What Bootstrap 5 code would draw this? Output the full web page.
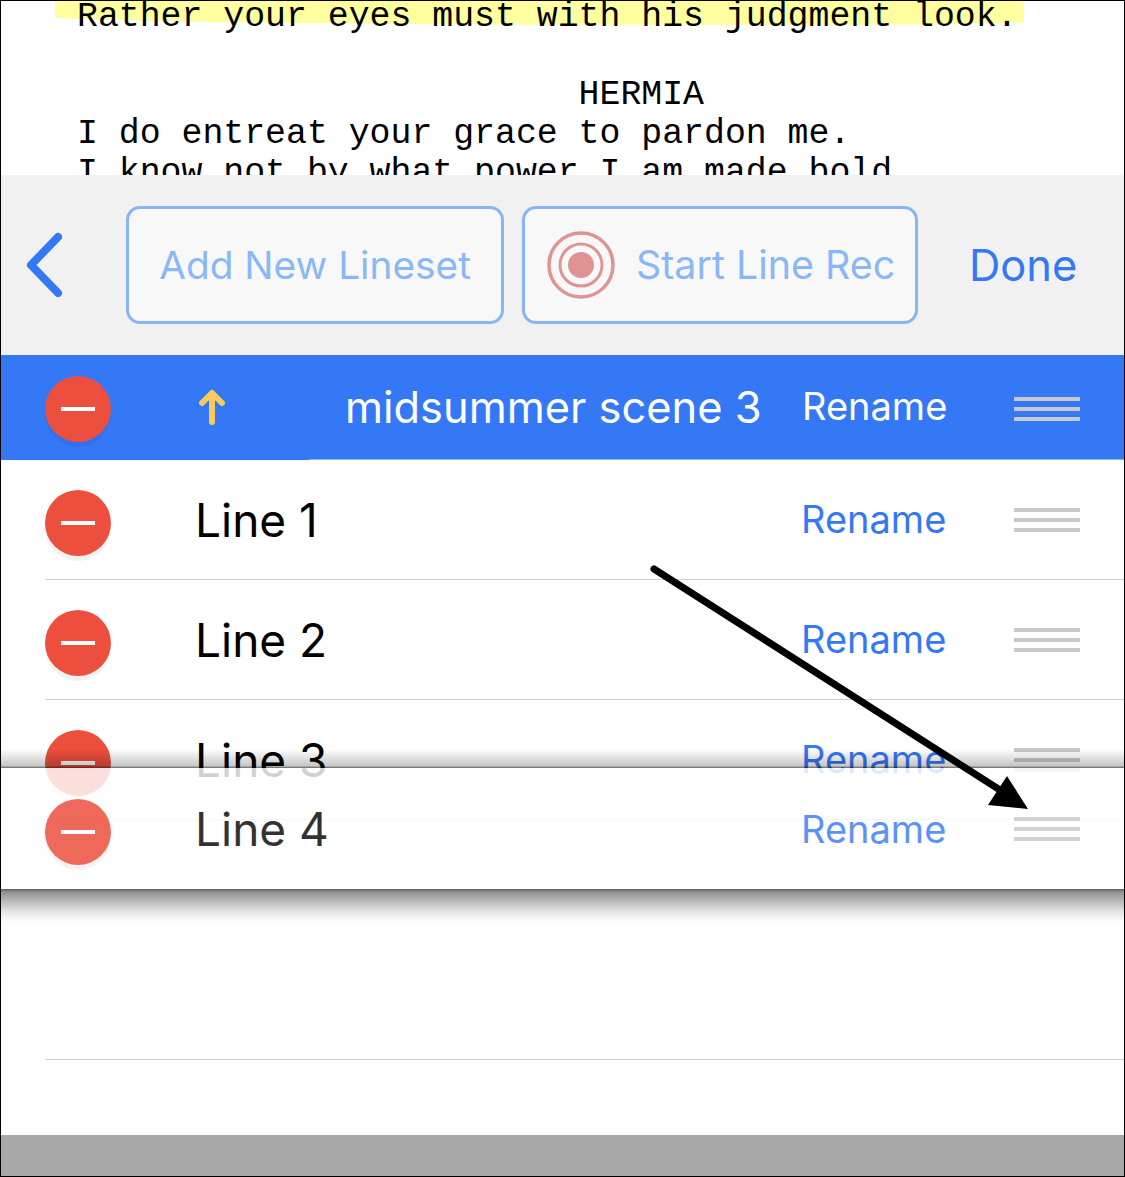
<!DOCTYPE html>
<html lang="en">
<head>
  <meta charset="UTF-8">
  <meta name="viewport" content="width=device-width, initial-scale=1.0">
  <link href="https://cdn.jsdelivr.net/npm/bootstrap@5.3.0/dist/css/bootstrap.min.css" rel="stylesheet">
  <style>
    body { margin: 0; background: #fff; font-family: Inter, "Liberation Sans", sans-serif; }
    .phone-frame { position: relative; width: 1125px; height: 1177px; border: 1px solid #000; overflow: hidden; }

    /* script page */
    .script-page { height: 178px; margin-top: -4px; overflow: hidden; position: relative; padding-left: 76px; font-family: "Liberation Mono", monospace; font-size: 34.85px; line-height: 39px; color: #000; }
    .script-hl { position: absolute; left: 54px; top: 0; width: 969px; height: 28px; background: #ffffa0; border-radius: 0 0 25% 75% / 0 0 3px 8px; }
    .script-line { position: relative; height: 39px; white-space: pre; }

    /* toolbar */
    .edit-toolbar { height: 180px; background: #f1f1f1; padding-left: 25px; }
    .back-btn { width: 100px; }
    .tool-btn { height: 118px; border: 3px solid #86b6f6; border-radius: 14px; background: #f8f8f8; color: #8ab8f7; padding: 0; }
    .tool-btn:hover { background: #f8f8f8; color: #8ab8f7; border-color: #86b6f6; }
    .add-btn { width: 378px; font-size: 38.8px; }
    .rec-btn { width: 396px; margin-left: 18px; gap: 21px; padding-left: 22px; font-size: 39.4px; }
    .rec-btn span { margin-top: 2px; }
    .done-btn { margin-left: 51px; margin-top: 2px; color: #3478f6; font-size: 43.4px; }

    /* list */
    .set-head { height: 105px; background: #3478f6; color: #fff; position: relative; padding-left: 44px; }
    .set-head::after { content: ""; position: absolute; left: 308px; right: 0; bottom: 0; height: 1px; background: #8ab4f8; }
    .line-row { height: 120px; margin-left: 44px; border-bottom: 1px solid #cfcfcf; }
    .blank-row { height: 240px; margin-left: 44px; border-bottom: 1px solid #cfcfcf; }
    .minus-dot { width: 66px; height: 66px; flex: none; border-radius: 50%; background: #ec4f3e; box-shadow: 0 5px 0 rgba(0,0,0,.05); margin-top: 7px; }
    .minus-dot::before { content: ""; width: 34px; height: 4px; background: #fff; }
    .set-head .minus-dot { margin-top: 3px; }
    .up-arrow { flex: none; margin-left: 87px; width: 28px; height: 36px; margin-top: -2px; }
    .set-title { margin-left: 119px; font-size: 43.4px; width: 457px; }
    .line-name { margin-left: 84px; font-size: 46px; width: 606px; color: #000; margin-top: 2px; }
    .rename-lbl { font-size: 38px; color: #3478f6; width: 213px; }
    .set-head .rename-lbl { color: #fff; width: 212px; margin-top: -2px; }
    .handle { width: 66px; flex: none; gap: 6px; }
    .handle span { height: 4px; background: #c7c7cc; }
    .handle-head { margin-top: 3px; }

    .sheet-foot { position: absolute; left: 0; right: 0; bottom: 0; height: 41px; background: #a9a9a9; }

    /* row being dragged */
    .drag-row { position: absolute; left: 0; right: 0; top: 767px; height: 121px; padding-left: 44px; background: rgba(255,255,255,.82); }
    .drag-row::before { content: ""; position: absolute; left: 0; right: 0; top: -19px; height: 19px; background: linear-gradient(to top, rgba(0,0,0,.6), rgba(0,0,0,.22) 12%, rgba(0,0,0,0)); }
    .drag-row::after { content: ""; position: absolute; left: 0; right: 0; top: 100%; height: 33px; background: linear-gradient(to bottom, rgba(0,0,0,.62), rgba(0,0,0,.42) 10%, rgba(0,0,0,.12) 65%, rgba(0,0,0,0)); }
    .drag-row > * { opacity: .8; }
    .drag-row > .minus-dot { opacity: .85; }
    .drag-row .rename-lbl { margin-top: 2px; }
    .pointer-arrow { position: absolute; left: 0; top: 0; pointer-events: none; }
  </style>
  <title>Lineset edit</title>
</head>
<body>
  <div class="phone-frame">
    <div class="script-page">
      <div class="script-hl"></div>
      <div class="script-line">Rather your eyes must with his judgment look.</div>
      <div class="script-line"> </div>
      <div class="script-line">                        HERMIA</div>
      <div class="script-line">I do entreat your grace to pardon me.</div>
      <div class="script-line">I know not by what power I am made bold,</div>
    </div>

    <div class="edit-toolbar d-flex align-items-center">
      <div class="back-btn">
        <svg class="d-block" width="40" height="66" viewBox="0 0 40 66"><path d="M32 5 L5 33 L32 61" fill="none" stroke="#3478f6" stroke-width="8" stroke-linecap="round" stroke-linejoin="round"/></svg>
      </div>
      <button class="btn tool-btn add-btn" type="button">Add New Lineset</button>
      <button class="btn tool-btn rec-btn d-flex align-items-center" type="button">
        <svg width="68" height="68" viewBox="0 0 68 68"><circle cx="34" cy="34" r="32" fill="none" stroke="#e09393" stroke-width="3.5"/><circle cx="34" cy="34" r="21" fill="none" stroke="#e09393" stroke-width="3"/><circle cx="34" cy="34" r="13" fill="#e09393"/></svg>
        <span>Start Line Rec</span>
      </button>
      <span class="done-btn">Done</span>
    </div>

    <div class="set-head d-flex align-items-center">
      <div class="minus-dot d-flex align-items-center justify-content-center"></div>
      <svg class="up-arrow" viewBox="0 0 28 36"><path d="M14 33 V4 M4 14 L14 4 L24 14" fill="none" stroke="#f9cb5e" stroke-width="6" stroke-linecap="round" stroke-linejoin="round"/></svg>
      <div class="set-title">midsummer scene 3</div>
      <div class="rename-lbl">Rename</div>
      <div class="handle handle-head d-flex flex-column"><span></span><span></span><span></span></div>
    </div>

    <div class="line-row d-flex align-items-center">
      <div class="minus-dot d-flex align-items-center justify-content-center"></div>
      <div class="line-name">Line 1</div>
      <div class="rename-lbl">Rename</div>
      <div class="handle d-flex flex-column"><span></span><span></span><span></span></div>
    </div>
    <div class="line-row d-flex align-items-center">
      <div class="minus-dot d-flex align-items-center justify-content-center"></div>
      <div class="line-name">Line 2</div>
      <div class="rename-lbl">Rename</div>
      <div class="handle d-flex flex-column"><span></span><span></span><span></span></div>
    </div>
    <div class="line-row d-flex align-items-center">
      <div class="minus-dot d-flex align-items-center justify-content-center"></div>
      <div class="line-name">Line 3</div>
      <div class="rename-lbl">Rename</div>
      <div class="handle d-flex flex-column"><span></span><span></span><span></span></div>
    </div>
    <div class="blank-row"></div>

    <div class="sheet-foot"></div>

    <div class="drag-row d-flex align-items-center">
      <div class="minus-dot d-flex align-items-center justify-content-center"></div>
      <div class="line-name">Line 4</div>
      <div class="rename-lbl">Rename</div>
      <div class="handle d-flex flex-column"><span></span><span></span><span></span></div>
    </div>

    <svg class="pointer-arrow" width="1123" height="1175" viewBox="1 1 1123 1175">
      <path d="M654 569 L1000 790" stroke="#000" stroke-width="7" stroke-linecap="round"/>
      <path d="M1007 776 L1028 809 L988 805 Z" fill="#000"/>
    </svg>
  </div>

  <script src="https://cdn.jsdelivr.net/npm/bootstrap@5.3.0/dist/js/bootstrap.bundle.min.js"></script>
</body>
</html>
